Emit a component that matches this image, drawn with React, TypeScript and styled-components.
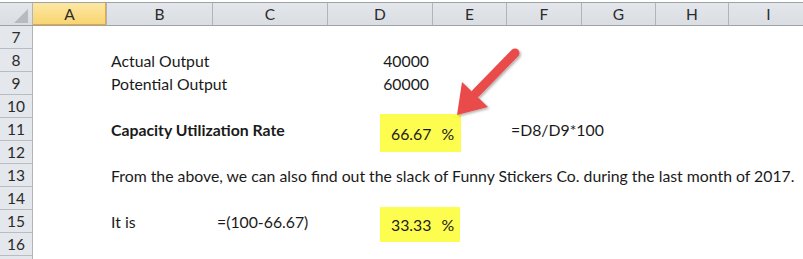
import React from 'react';
import styled, { createGlobalStyle } from 'styled-components';

const GlobalStyle = createGlobalStyle`
  html, body {
    margin: 0;
    padding: 0;
    background: #ffffff;
  }
  body {
    font-family: Lato, "Liberation Sans", sans-serif;
    overflow: hidden;
  }
`;

const COLS = [74, 106, 115, 105, 74, 75, 74, 73, 80];
const LETTERS = ['A', 'B', 'C', 'D', 'E', 'F', 'G', 'H', 'I'];
const TEMPLATE = `33px ${COLS.map((w) => `${w}px`).join(' ')}`;

type Mark = { top: number; height: number; width: number };
type Cell = { text?: string; align?: 'left' | 'right'; bold?: boolean; span?: number; mark?: Mark };

const ROWS: { n: number; cells: Record<number, Cell> }[] = [
  { n: 7, cells: {} },
  { n: 8, cells: { 1: { text: 'Actual Output' }, 3: { text: '40000', align: 'right' } } },
  { n: 9, cells: { 1: { text: 'Potential Output' }, 3: { text: '60000', align: 'right' } } },
  { n: 10, cells: {} },
  {
    n: 11,
    cells: {
      1: { text: 'Capacity Utilization Rate', bold: true },
      3: { text: '66.67', mark: { top: -4, height: 38, width: 81 } },
      5: { text: '=D8/D9*100' },
    },
  },
  { n: 12, cells: {} },
  {
    n: 13,
    cells: {
      1: {
        text: 'From the above, we can also find out the slack of Funny Stickers Co. during the last month of 2017.',
        span: 8,
      },
    },
  },
  { n: 14, cells: {} },
  {
    n: 15,
    cells: {
      1: { text: 'It is' },
      2: { text: '=(100-66.67)' },
      3: { text: '33.33', mark: { top: -3, height: 35, width: 80 } },
    },
  },
  { n: 16, cells: {} },
  { n: 17, cells: {} },
];

const App = () => {
  return (
    <>
      <GlobalStyle />
      <Sheet>
        <HeaderRow>
          <Corner>
            <CornerTriangle />
          </Corner>
          {LETTERS.map((l, i) => (
            <ColHeader key={l} $selected={i === 0}>
              {l}
            </ColHeader>
          ))}
        </HeaderRow>
        {ROWS.map((row) => {
          const out: React.ReactNode[] = [];
          let c = 0;
          while (c < COLS.length) {
            const cell = row.cells[c];
            const span = cell?.span ?? 1;
            out.push(
              <DataCell key={c} $span={span} $align={cell?.align ?? 'left'} $bold={!!cell?.bold}>
                {cell?.mark ? (
                  <Highlight $top={cell.mark.top} $height={cell.mark.height} $width={cell.mark.width}>
                    {cell.text}
                    <Percent>%</Percent>
                  </Highlight>
                ) : (
                  cell?.text
                )}
              </DataCell>,
            );
            c += span;
          }
          return (
            <Row key={row.n}>
              <RowHeader>{row.n}</RowHeader>
              {out}
            </Row>
          );
        })}
        <Arrow width="90" height="90" viewBox="0 0 90 90">
          <defs>
            <filter id="shadow" x="-20%" y="-20%" width="140%" height="140%">
              <feDropShadow dx="1.5" dy="1.5" stdDeviation="1.2" floodColor="#000" floodOpacity="0.3" />
            </filter>
          </defs>
          <g filter="url(#shadow)">
            <line x1="69" y1="10" x2="30" y2="50" stroke="#e84c4a" strokeWidth="9" strokeLinecap="round" />
            <polygon points="16,39 42,64 11,72" fill="#e84c4a" />
          </g>
        </Arrow>
      </Sheet>
    </>
  );
};

export default App;

const Sheet = styled.div`
  position: relative;
  width: 803px;
  height: 259px;
  padding-top: 2px;
  box-sizing: border-box;
  overflow: hidden;
  font-size: 15.8px;
  color: #1a1a1a;
`;

const HeaderRow = styled.div`
  display: grid;
  grid-template-columns: ${TEMPLATE};
  grid-template-rows: 22px;
  height: 22px;
  border-top: 1px solid #9ea3a9;
  border-bottom: 1px solid #9ea3a9;
  background: linear-gradient(#e3e6ea, #dadee3);
`;

const Corner = styled.div`
  position: relative;
  border-right: 1px solid #b1b5ba;
`;

const CornerTriangle = styled.div`
  position: absolute;
  right: 4px;
  bottom: 2px;
  width: 0;
  height: 0;
  border-left: 14px solid transparent;
  border-bottom: 14px solid #b7bbc0;
`;

const ColHeader = styled.div<{ $selected: boolean }>`
  display: flex;
  align-items: center;
  justify-content: center;
  border-right: 1px solid #b1b5ba;
  color: #2b2b2b;
  font-size: 15.5px;
  background: ${(p) => (p.$selected ? 'linear-gradient(#fde7a4, #f9d46f)' : 'transparent')};
  box-shadow: ${(p) => (p.$selected ? 'inset 0 -1px 0 #e2a93d, inset -1px 0 0 #e2a93d' : 'none')};
`;

const Row = styled.div`
  display: grid;
  grid-template-columns: ${TEMPLATE};
  grid-template-rows: 23px;
  height: 23px;
`;

const RowHeader = styled.div`
  display: flex;
  align-items: center;
  justify-content: center;
  box-sizing: border-box;
  background: #e4e7eb;
  border-right: 1px solid #b1b5ba;
  border-bottom: 1px solid #b9bdc2;
  color: #2b2b2b;
  font-size: 15.5px;
`;

const DataCell = styled.div<{ $span: number; $align: string; $bold: boolean }>`
  grid-column: span ${(p) => p.$span};
  display: flex;
  align-items: center;
  justify-content: ${(p) => (p.$align === 'right' ? 'flex-end' : 'flex-start')};
  min-width: 0;
  padding: 0 4px;
  white-space: nowrap;
  overflow: visible;
  font-weight: ${(p) => (p.$bold ? 700 : 400)};
  position: relative;
  z-index: 1;
`;

const Highlight = styled.span<{ $top: number; $height: number; $width: number }>`
  align-self: flex-start;
  flex: none;
  display: flex;
  align-items: center;
  box-sizing: border-box;
  height: ${(p) => p.$height}px;
  width: ${(p) => p.$width}px;
  margin-left: 48px;
  margin-top: ${(p) => p.$top}px;
  padding-left: 11px;
  background: #fdfd4f;
`;

const Percent = styled.span`
  margin-left: 10px;
`;

const Arrow = styled.svg`
  position: absolute;
  left: 446px;
  top: 43px;
  z-index: 2;
`;
